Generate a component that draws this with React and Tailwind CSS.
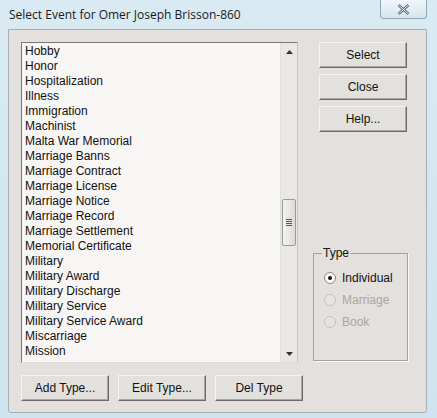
import React from "react";

const items = [
  "Hobby","Honor","Hospitalization","Illness","Immigration","Machinist","Malta War Memorial",
  "Marriage Banns","Marriage Contract","Marriage License","Marriage Notice","Marriage Record",
  "Marriage Settlement","Memorial Certificate","Military","Military Award","Military Discharge",
  "Military Service","Military Service Award","Miscarriage","Mission",
];

function Btn({ children, className = "" }) {
  return (
    <div
      className={
        "flex items-center justify-center h-[26px] bg-[#e3e1de] border border-t-[#f4f3f1] border-l-[#f4f3f1] border-r-[#6d6b69] border-b-[#6d6b69] shadow-[inset_-1px_-1px_0_#a9a7a4] text-[12px] text-[#111] shrink-0 " +
        className
      }
      style={{ fontFamily: '"Liberation Sans", Arial, sans-serif' }}
    >
      {children}
    </div>
  );
}

function Radio({ checked, disabled, label }) {
  return (
    <div className="flex items-center h-[22px]">
      <div
        className={
          "w-[12px] h-[12px] rounded-full border flex items-center justify-center " +
          (disabled ? "border-[#c4c2bf] bg-[#e6e4e1]" : "border-[#8d8b88] bg-[#fafafa]")
        }
      >
        {checked && <div className="w-[4px] h-[4px] rounded-full bg-[#111]" />}
      </div>
      <span className={"ml-[6px] text-[12px] " + (disabled ? "text-[#a9a7a4]" : "text-[#111]")}>{label}</span>
    </div>
  );
}

export default function App() {
  return (
    <div
      className="w-[437px] h-[418px] bg-gradient-to-b from-[#d9eaf3] to-[#cfe4ee] flex flex-col overflow-hidden"
      style={{ fontFamily: '"Liberation Sans", Arial, sans-serif' }}
    >
      <div className="h-[29px] flex items-start relative shrink-0">
        <div
          className="mt-[6px] ml-[9px] text-[12px] text-[#1a1a1a]"
          style={{ fontFamily: '"Open Sans", "Noto Sans", sans-serif' }}
        >
          Select Event for Omer Joseph Brisson-860
        </div>
        <div className="absolute left-[380px] top-0 w-[47px] h-[19px] rounded-b-[4px] border border-t-0 border-[#8ea7b6] bg-gradient-to-b from-[#f0f6fa] to-[#d6e5ee] flex items-center justify-center">
          <svg width="13" height="11" viewBox="0 0 13 11">
            <path d="M1.5 1 L11.5 10 M11.5 1 L1.5 10" stroke="#5c6a73" strokeWidth="2.6" fill="none" />
            <path d="M1.5 1 L11.5 10 M11.5 1 L1.5 10" stroke="#e9f0f4" strokeWidth="1" fill="none" />
          </svg>
        </div>
      </div>
      <div className="ml-[8px] w-[419px] h-[384px] bg-[#e3e0dd] border border-[#a3aeb5] rounded-b-[3px] flex pl-[12px] pt-[12px]">
        <div className="flex flex-col w-[277px] shrink-0">
          <div className="w-[277px] h-[321px] border border-[#7b7976] border-r-[#c9c7c4] border-b-[#dedcd9] bg-[#f7f6f5] flex">
            <div className="flex-1 pl-[3px] pt-[1px]">
              {items.map((t) => (
                <div key={t} className="h-[15px] leading-[15px] text-[12px] text-[#111] whitespace-nowrap">
                  {t}
                </div>
              ))}
            </div>
            <div className="w-[17px] bg-[#e9e8e6] border-l border-[#e0dfdd] flex flex-col">
              <div className="h-[17px] flex items-center justify-center">
                <svg width="7" height="4" viewBox="0 0 7 4"><path d="M0 4 L3.5 0 L7 4 Z" fill="#333" /></svg>
              </div>
              <div className="h-[139px]" />
              <div className="mx-[1px] h-[47px] rounded-[2px] border border-[#9b9a98] bg-gradient-to-r from-[#f3f3f3] to-[#dcdbd9] flex flex-col items-center justify-center gap-[1px]">
                <div className="w-[6px] h-[1px] bg-[#555]" />
                <div className="w-[6px] h-[1px] bg-[#555]" />
                <div className="w-[6px] h-[1px] bg-[#555]" />
                <div className="w-[6px] h-[1px] bg-[#555]" />
              </div>
              <div className="flex-1" />
              <div className="h-[17px] flex items-center justify-center">
                <svg width="7" height="4" viewBox="0 0 7 4"><path d="M0 0 L3.5 4 L7 0 Z" fill="#333" /></svg>
              </div>
            </div>
          </div>
          <div className="flex gap-[9px] mt-[12px]">
            <Btn className="w-[88px]">Add Type...</Btn>
            <Btn className="w-[88px]">Edit Type...</Btn>
            <Btn className="w-[88px]">Del Type</Btn>
          </div>
        </div>
        <div className="ml-[15px] w-[95px] flex flex-col shrink-0">
          <div className="ml-[6px] flex flex-col gap-[6px]">
            <Btn className="w-[88px]">Select</Btn>
            <Btn className="w-[88px]">Close</Btn>
            <Btn className="w-[88px]">Help...</Btn>
          </div>
          <fieldset className="mt-[115px] w-[95px] h-[114px] border border-[#a4a29f] shadow-[1px_1px_0_#fbfaf9] pl-[10px] pt-[7px] m-0">
            <legend className="ml-[-2px] px-[1px] text-[12px] text-[#111] leading-[13px]">Type</legend>
            <div className="flex flex-col">
              <Radio checked label="Individual" />
              <Radio disabled label="Marriage" />
              <Radio disabled label="Book" />
            </div>
          </fieldset>
        </div>
      </div>
    </div>
  );
}
